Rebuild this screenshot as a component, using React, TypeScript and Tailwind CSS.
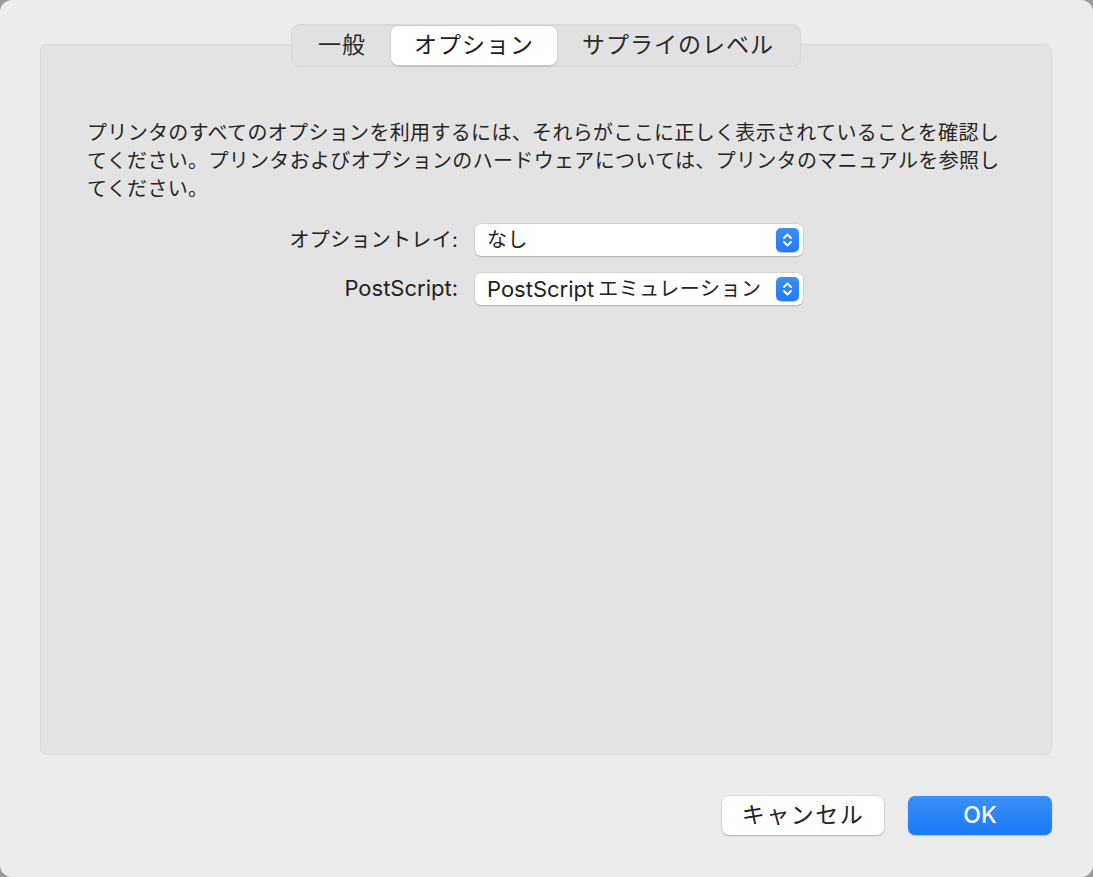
import React from "react";

const font = { fontFamily: '"Inter", "Noto Sans CJK JP", sans-serif' };

const tabs = ["一般", "オプション", "サプライのレベル"];

const Stepper = () => (
    <div className="w-[23px] h-[24px] rounded-[5px] bg-gradient-to-b from-[#3b8ef8] to-[#1f7cf6] flex items-center justify-center shadow-[0_0.5px_1px_rgba(0,0,0,0.25)]">
        <svg width="11" height="16" viewBox="0 0 11 16" fill="none" stroke="white" strokeWidth="1.9" strokeLinecap="round" strokeLinejoin="round">
            <path d="M2 6 L5.5 2.5 L9 6" />
            <path d="M2 10 L5.5 13.5 L9 10" />
        </svg>
    </div>
);

const PopUp = ({ children }: { children: React.ReactNode }) => (
    <div className="w-[328px] h-[32px] rounded-[6px] bg-white shadow-[0_0_0_0.5px_rgba(0,0,0,0.12),0_1px_1.5px_rgba(0,0,0,0.18)] flex items-center pl-[12px] pr-[4px]">
        <span className="flex-1 flex items-center text-[20px] text-[#222] leading-none tracking-[0.5px]">{children}</span>
        <Stepper />
    </div>
);

const App = () => {
    const selected = 1;

    return (
        <div className="w-[1093px] h-[877px] bg-[#9b9b9b]" style={font}>
            <div className="w-full h-full rounded-[12px] bg-[#ececec] flex flex-col px-[40px] pr-[41px]">
                <div className="relative z-10 flex justify-center pt-[24px]">
                    <div className="flex h-[43px] items-center rounded-[9px] bg-[#e1e1e1] border border-[#d8d8d8] p-[1px] shadow-[inset_0_0.5px_1px_rgba(0,0,0,0.05)]">
                        {tabs.map((t, i) => (
                            <div key={t} className={i === selected ? "h-[39px] px-[23px] flex items-center rounded-[7px] bg-white shadow-[0_0.5px_2px_rgba(0,0,0,0.2)] text-[23px] tracking-[1px] text-[#1d1d1d]" : "h-[39px] px-[25px] flex items-center text-[23px] tracking-[1px] text-[#2a2a2a]"}>
                                {t}
                            </div>
                        ))}
                    </div>
                </div>

                <div className="-mt-[23px] h-[711px] rounded-[7px] bg-[#e3e3e3] border border-[#d9d9d9] pt-[74px] pl-[46px]">
                    <p className="text-[20px] leading-[28px] tracking-[0.33px] text-[#262626] whitespace-nowrap">
                        プリンタのすべてのオプションを利用するには、それらがここに正しく表示されていることを確認し
                        <br />
                        てください。プリンタおよびオプションのハードウェアについては、プリンタのマニュアルを参照し
                        <br />
                        てください。
                    </p>
                    <div className="flex flex-col gap-[16px] mt-[21px]">
                        <div className="flex items-center">
                            <div className="w-[371px] text-right text-[20px] tracking-[0.3px] text-[#222]">オプショントレイ:</div>
                            <div className="ml-[17px]">
                                <PopUp>なし</PopUp>
                            </div>
                        </div>
                        <div className="flex items-center">
                            <div className="w-[371px] text-right text-[22px] text-[#222]">PostScript:</div>
                            <div className="ml-[17px]">
                                <PopUp>
                                    <span className="text-[22px] tracking-normal">PostScript</span>
                                    <span className="ml-[4px]">エミュレーション</span>
                                </PopUp>
                            </div>
                        </div>
                    </div>
                </div>

                <div className="flex justify-end gap-[24px] mt-[41px]">
                    <button className="w-[162px] h-[39px] rounded-[7px] bg-white shadow-[0_0_0_0.5px_rgba(0,0,0,0.12),0_1px_2px_rgba(0,0,0,0.2)] text-[23px] tracking-[1.5px] text-[#222]">
                        キャンセル
                    </button>
                    <button className="w-[144px] h-[39px] rounded-[7px] bg-gradient-to-b from-[#3a90f9] to-[#1a7af7] shadow-[0_0.5px_1.5px_rgba(0,0,0,0.2)] text-[23px] font-medium text-white">
                        OK
                    </button>
                </div>
            </div>
        </div>
    );
};

export default App;
